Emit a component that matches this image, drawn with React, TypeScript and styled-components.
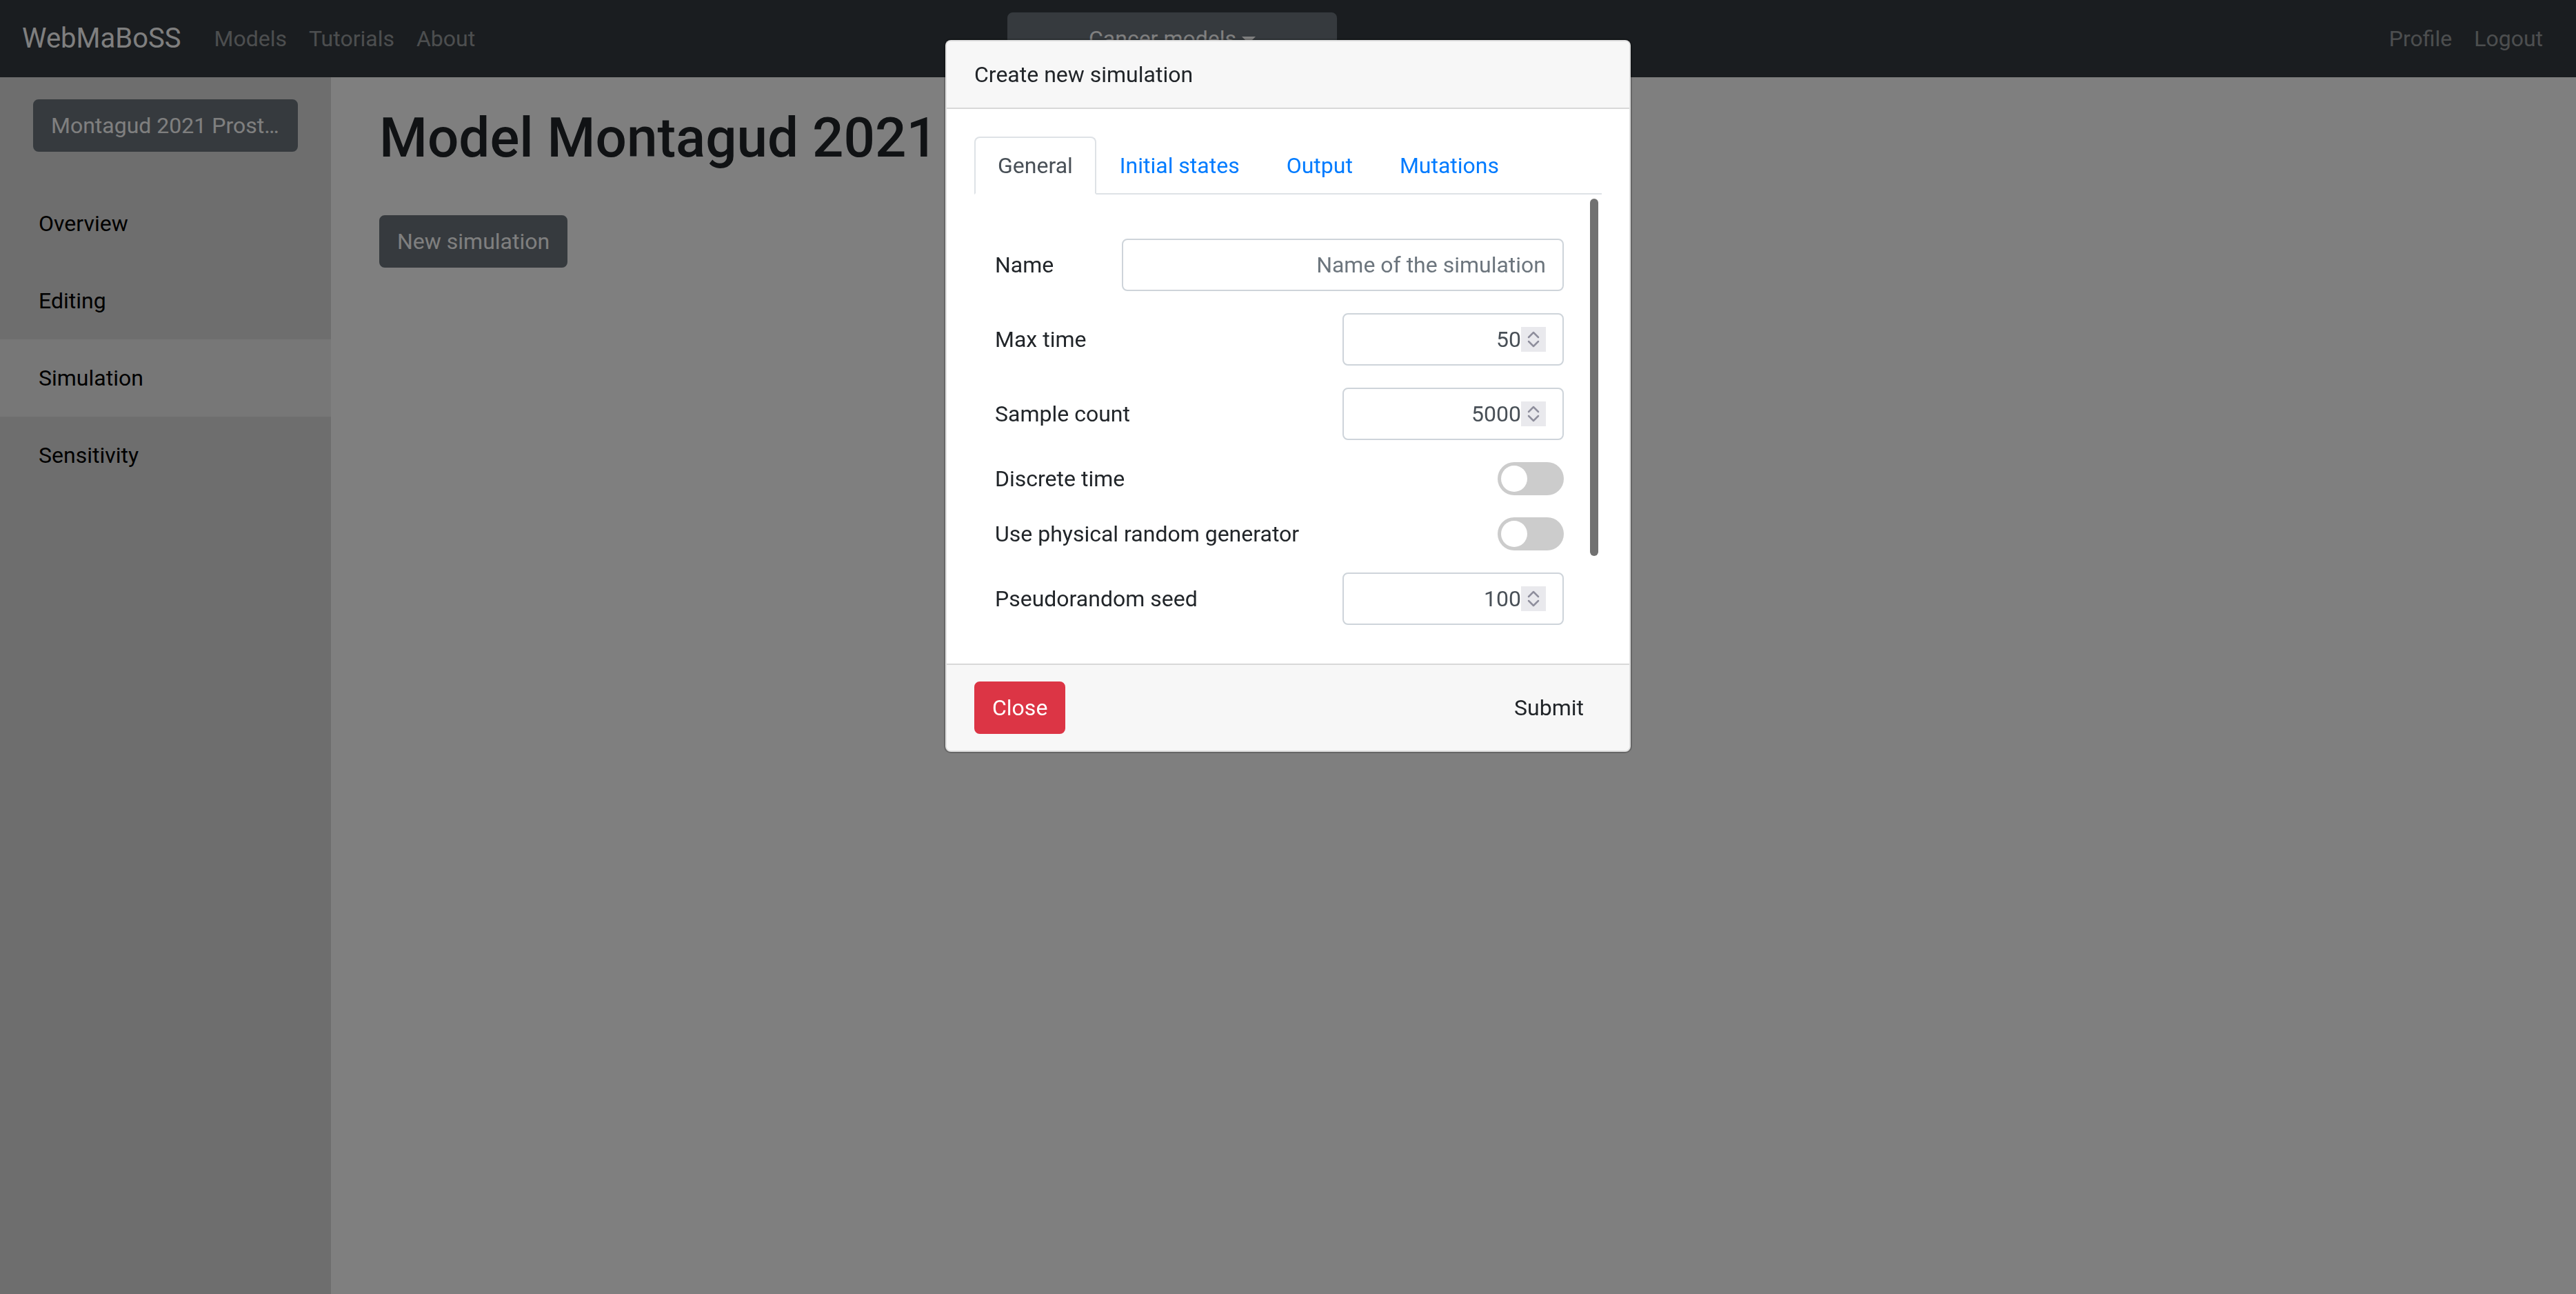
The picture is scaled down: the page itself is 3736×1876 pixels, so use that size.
import React from "react";
import styled, { createGlobalStyle } from "styled-components";

const GlobalStyle = createGlobalStyle`
  html, body { margin: 0; padding: 0; }
  body {
    font-family: Roboto, "Liberation Sans", Arial, sans-serif;
    font-size: 32px;
    line-height: 1.5;
    color: #212529;
    background: #fff;
  }
  *, *::before, *::after { box-sizing: border-box; }
`;

const Page = styled.div`
  width: 3736px;
  height: 1876px;
  display: flex;
  flex-direction: column;
  overflow: hidden;
`;

/* ---------- Navbar ---------- */
const Navbar = styled.nav`
  height: 112px;
  flex-shrink: 0;
  background: #343a40;
  padding: 0 32px;
  display: grid;
  grid-template-columns: 1429px 478px 1fr;
  align-items: center;
`;

const NavGroup = styled.div<{ $end?: boolean }>`
  display: flex;
  align-items: center;
  justify-content: ${(p) => (p.$end ? "flex-end" : "flex-start")};
`;

const Brand = styled.a`
  font-size: 40px;
  line-height: 60px;
  color: #fff;
  margin-right: 32px;
  text-decoration: none;
`;

const NavLink = styled.a`
  color: rgba(255, 255, 255, 0.5);
  padding: 16px;
  line-height: 48px;
  text-decoration: none;
`;

const DropdownButton = styled.button`
  width: 478px;
  height: 76px;
  background: #6c757d;
  border: 2px solid #6c757d;
  border-radius: 8px;
  color: #fff;
  font: inherit;
  line-height: 48px;
  padding: 12px 24px;
  display: flex;
  align-items: center;
  justify-content: center;
  &::after {
    content: "";
    display: inline-block;
    margin-left: 8px;
    margin-top: 4px;
    border-top: 10px solid #fff;
    border-right: 10px solid transparent;
    border-left: 10px solid transparent;
  }
`;

/* ---------- Layout ---------- */
const Body = styled.div`
  flex: 1;
  display: flex;
  min-height: 0;
`;

const Sidebar = styled.aside`
  width: 480px;
  flex-shrink: 0;
  background: #dcdcdc;
  padding-top: 32px;
`;

const SecondaryButton = styled.button`
  height: 76px;
  background: #6c757d;
  border: 2px solid #6c757d;
  border-radius: 8px;
  color: #fff;
  font: inherit;
  line-height: 48px;
  padding: 12px 24px;
  white-space: nowrap;
  overflow: hidden;
  text-overflow: ellipsis;
  text-align: left;
`;

const ModelButton = styled(SecondaryButton)`
  display: block;
  margin-left: 48px;
  width: 384px;
`;

const SideNav = styled.nav`
  margin-top: 48px;
  display: flex;
  flex-direction: column;
`;

const SideItem = styled.a<{ $active?: boolean }>`
  height: 112px;
  padding: 0 56px;
  display: flex;
  align-items: center;
  color: #000;
  text-decoration: none;
  background: ${(p) => (p.$active ? "#eeeeee" : "transparent")};
`;

const Main = styled.main`
  flex: 1;
  padding: 40px 70px;
`;

const Title = styled.h1`
  font-size: 80px;
  font-weight: 500;
  line-height: 1.2;
  margin: 0 0 16px;
  white-space: nowrap;
`;

const NewSimButton = styled(SecondaryButton)`
  margin-top: 48px;
`;

/* ---------- Modal ---------- */
const Backdrop = styled.div`
  position: fixed;
  inset: 0;
  background: rgba(0, 0, 0, 0.5);
  z-index: 10;
`;

const ModalLayer = styled.div`
  position: fixed;
  inset: 0;
  z-index: 20;
  display: flex;
  justify-content: center;
  align-items: flex-start;
  padding-top: 56px;
`;

const ModalBox = styled.div`
  width: 998px;
  background: #fff;
  background-clip: padding-box;
  border: 2px solid rgba(0, 0, 0, 0.2);
  border-radius: 10px;
`;

const Card = styled.div`
  border: 2px solid rgba(0, 0, 0, 0.125);
  border-radius: 8px;
  overflow: hidden;
`;

const CardHeader = styled.div`
  background: #f7f7f7;
  padding: 24px 40px;
  line-height: 48px;
  border-bottom: 2px solid rgba(0, 0, 0, 0.125);
`;

const CardBody = styled.div`
  padding: 40px;
`;

const Tabs = styled.div`
  display: flex;
  border-bottom: 2px solid #dee2e6;
`;

const Tab = styled.a<{ $active?: boolean }>`
  padding: 16px 32px;
  line-height: 48px;
  margin-bottom: -2px;
  border: 2px solid transparent;
  border-radius: 8px 8px 0 0;
  text-decoration: none;
  color: ${(p) => (p.$active ? "#495057" : "#007bff")};
  background: ${(p) => (p.$active ? "#fff" : "transparent")};
  border-color: ${(p) => (p.$active ? "#dee2e6 #dee2e6 #fff" : "transparent")};
`;

const ScrollArea = styled.div`
  position: relative;
  height: 640px;
  overflow: hidden;
`;

const ScrollThumb = styled.div`
  position: absolute;
  right: 5px;
  top: 6px;
  width: 12px;
  height: 518px;
  border-radius: 6px;
  background: #717171;
`;

const Form = styled.form`
  padding: 64px 55px 0 30px;
`;

const FormRow = styled.div`
  display: flex;
  align-items: center;
  justify-content: space-between;
  margin-bottom: 32px;
`;

const Label = styled.label<{ $width?: number }>`
  flex: ${(p) => (p.$width ? `0 0 ${p.$width}px` : "1")};
  color: #212529;
`;

const TextInput = styled.input`
  flex: 1;
  min-width: 0;
  height: 76px;
  border: 2px solid #ced4da;
  border-radius: 8px;
  padding: 12px 24px;
  font: inherit;
  line-height: 48px;
  color: #495057;
  text-align: right;
  outline: none;
  &::placeholder {
    color: #6c757d;
    opacity: 1;
  }
`;

const NumberField = styled.div`
  width: 321px;
  height: 76px;
  border: 2px solid #ced4da;
  border-radius: 8px;
  padding: 0 24px;
  display: flex;
  align-items: center;
  background: #fff;
`;

const NumberInput = styled.input`
  flex: 1;
  min-width: 0;
  border: 0;
  outline: none;
  padding: 0;
  font: inherit;
  line-height: 48px;
  color: #495057;
  text-align: right;
  background: transparent;
`;

const Spinner = styled.span`
  width: 36px;
  height: 36px;
  flex-shrink: 0;
  background: #e9e9ed;
  display: flex;
`;

const SwitchTrack = styled.span<{ $on?: boolean }>`
  position: relative;
  width: 96px;
  height: 48px;
  border-radius: 24px;
  background: ${(p) => (p.$on ? "#007bff" : "#cccccc")};
  flex-shrink: 0;
  &::after {
    content: "";
    position: absolute;
    top: 5px;
    left: ${(p) => (p.$on ? "53px" : "5px")};
    width: 38px;
    height: 38px;
    border-radius: 50%;
    background: #fff;
  }
`;

const CardFooter = styled.div`
  background: #f7f7f7;
  border-top: 2px solid rgba(0, 0, 0, 0.125);
  padding: 24px 40px;
  display: flex;
  justify-content: space-between;
  align-items: center;
`;

const FooterButton = styled.button<{ $variant?: "danger" | "plain" }>`
  height: 76px;
  padding: 12px 24px;
  font: inherit;
  line-height: 48px;
  border-radius: 8px;
  border: 2px solid ${(p) => (p.$variant === "danger" ? "#dc3545" : "transparent")};
  background: ${(p) => (p.$variant === "danger" ? "#dc3545" : "transparent")};
  color: ${(p) => (p.$variant === "danger" ? "#fff" : "#212529")};
`;

const SpinIcon = () => (
  <svg width="36" height="36" viewBox="0 0 36 36" fill="none">
    <path d="M11 15 L18 8 L25 15" stroke="#8f8f9d" strokeWidth="2.5" strokeLinecap="round" strokeLinejoin="round" />
    <path d="M11 21 L18 28 L25 21" stroke="#8f8f9d" strokeWidth="2.5" strokeLinecap="round" strokeLinejoin="round" />
  </svg>
);

const NumberControl = ({ value }: { value: string }) => (
  <NumberField>
    <NumberInput readOnly value={value} />
    <Spinner>
      <SpinIcon />
    </Spinner>
  </NumberField>
);

export default function App() {
  return (
    <>
      <GlobalStyle />
      <Page>
        <Navbar>
          <NavGroup>
            <Brand>WebMaBoSS</Brand>
            <NavLink>Models</NavLink>
            <NavLink>Tutorials</NavLink>
            <NavLink>About</NavLink>
          </NavGroup>
          <DropdownButton>Cancer models</DropdownButton>
          <NavGroup $end>
            <NavLink>Profile</NavLink>
            <NavLink>Logout</NavLink>
          </NavGroup>
        </Navbar>
        <Body>
          <Sidebar>
            <ModelButton>Montagud 2021 Prost…</ModelButton>
            <SideNav>
              <SideItem>Overview</SideItem>
              <SideItem>Editing</SideItem>
              <SideItem $active>Simulation</SideItem>
              <SideItem>Sensitivity</SideItem>
            </SideNav>
          </Sidebar>
          <Main>
            <Title>Model Montagud 2021</Title>
            <NewSimButton>New simulation</NewSimButton>
          </Main>
        </Body>
      </Page>
      <Backdrop />
      <ModalLayer>
        <ModalBox>
          <Card>
            <CardHeader>Create new simulation</CardHeader>
            <CardBody>
              <Tabs>
                <Tab $active>General</Tab>
                <Tab>Initial states</Tab>
                <Tab>Output</Tab>
                <Tab>Mutations</Tab>
              </Tabs>
              <ScrollArea>
                <Form>
                  <FormRow>
                    <Label $width={184}>Name</Label>
                    <TextInput placeholder="Name of the simulation" />
                  </FormRow>
                  <FormRow>
                    <Label>Max time</Label>
                    <NumberControl value="50" />
                  </FormRow>
                  <FormRow>
                    <Label>Sample count</Label>
                    <NumberControl value="5000" />
                  </FormRow>
                  <FormRow>
                    <Label>Discrete time</Label>
                    <SwitchTrack />
                  </FormRow>
                  <FormRow>
                    <Label>Use physical random generator</Label>
                    <SwitchTrack />
                  </FormRow>
                  <FormRow>
                    <Label>Pseudorandom seed</Label>
                    <NumberControl value="100" />
                  </FormRow>
                </Form>
                <ScrollThumb />
              </ScrollArea>
            </CardBody>
            <CardFooter>
              <FooterButton $variant="danger">Close</FooterButton>
              <FooterButton $variant="plain">Submit</FooterButton>
            </CardFooter>
          </Card>
        </ModalBox>
      </ModalLayer>
    </>
  );
}
